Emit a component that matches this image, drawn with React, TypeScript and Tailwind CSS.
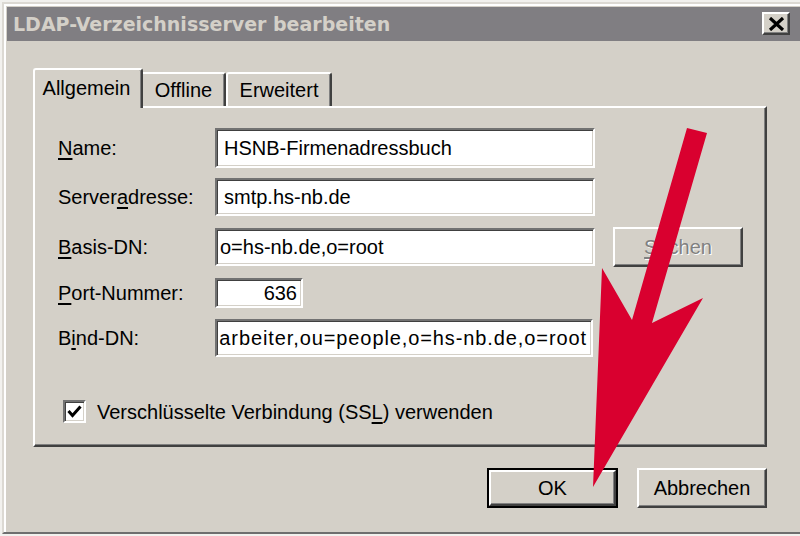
import React from "react";

function U({ children }: { children: React.ReactNode }) {
  return <span className="underline decoration-[1.5px] underline-offset-[3px]">{children}</span>;
}

function Field({ className, children }: { className: string; children: React.ReactNode }) {
  return (
    <div
      className={
        "bg-white border-2 border-t-[#727272] border-l-[#727272] border-r-white border-b-white shadow-[inset_1px_1px_0_#404040,inset_-1px_-1px_0_#d4d0c8] flex items-center whitespace-nowrap overflow-hidden " +
        className
      }
    >
      {children}
    </div>
  );
}

export default function App() {
  return (
    <div className="relative w-[800px] h-[536px] overflow-hidden bg-[#f2f1ee] font-['Liberation_Sans',Arial,sans-serif] text-[20px] text-black">
      <div className="ml-[2px] mt-[2px] w-[800px] h-[532px] bg-[#d4d0c8] border-l-2 border-t-2 border-b-2 border-l-[#dcd9d3] border-t-[#dcd9d3] border-b-[#6e6e6e] shadow-[inset_2px_2px_0_#ffffff] pl-[3px] pt-[3px] flex flex-col">
        {/* Title bar */}
        <div className="h-[34px] shrink-0 bg-[#807e82] flex items-start justify-between pl-[6px] pr-[12px]">
          <div className="h-[34px] flex items-center pt-[1px] font-['DejaVu_Sans',sans-serif] font-bold text-[19px] text-[#d4d0c8] whitespace-nowrap">
            LDAP-Verzeichnisserver bearbeiten
          </div>
          <div className="mt-[5px] w-[28px] h-[23px] bg-[#d4d0c8] border-t-2 border-l-2 border-r-2 border-b-2 border-t-white border-l-white border-r-[#404040] border-b-[#404040] shadow-[inset_-1px_-1px_0_#808080] flex items-center justify-center">
            <svg width="17" height="14" viewBox="0 0 17 14">
              <path d="M2 1 L15 13 M15 1 L2 13" stroke="#000" strokeWidth="3.2" />
            </svg>
          </div>
        </div>

        {/* Body */}
        <div className="pl-[26px] pt-[27px] flex flex-col">
          {/* Tabs */}
          <div className="flex items-end h-[38px] w-[734px]">
            <div className="relative z-10 -mb-[2px] h-[40px] w-[110px] bg-[#d4d0c8] border-l-2 border-t-2 border-r-2 border-l-white border-t-white border-r-[#404040] rounded-t-[3px] shadow-[inset_-1px_0_0_#808080] flex items-center justify-center pr-[3px] pb-[3px]">
              Allgemein
            </div>
            <div className="h-[34px] w-[83px] bg-[#d4d0c8] border-t-2 border-r-2 border-t-white border-r-[#404040] rounded-tr-[3px] shadow-[inset_-1px_0_0_#808080] flex items-center justify-center">
              Offline
            </div>
            <div className="h-[34px] w-[106px] bg-[#d4d0c8] border-l-2 border-t-2 border-r-2 border-l-white border-t-white border-r-[#404040] rounded-t-[3px] shadow-[inset_-1px_0_0_#808080] flex items-center justify-center">
              Erweitert
            </div>
          </div>

          {/* Panel */}
          <div className="w-[734px] h-[341px] border-t-2 border-l-2 border-r-2 border-b-2 border-t-white border-l-white border-r-[#404040] border-b-[#404040] shadow-[inset_-1px_-1px_0_#808080] pt-[20px] pl-[23px] flex flex-col">
            <div className="flex items-center h-[40px]">
              <div className="w-[157px] shrink-0">
                <U>N</U>ame:
              </div>
              <Field className="w-[380px] h-[40px] pl-[7px]">HSNB-Firmenadressbuch</Field>
            </div>
            <div className="flex items-center h-[38px] mt-[10px]">
              <div className="w-[157px] shrink-0">
                Server<U>a</U>dresse:
              </div>
              <Field className="w-[380px] h-[38px] pl-[7px]">smtp.hs-nb.de</Field>
            </div>
            <div className="flex items-start h-[40px] mt-[11px]">
              <div className="w-[157px] shrink-0 h-[40px] flex items-center">
                <span>
                  <U>B</U>asis-DN:
                </span>
              </div>
              <Field className="w-[380px] h-[38px] mt-[1px] pl-[3px]">o=hs-nb.de,o=root</Field>
              <div className="ml-[18px] w-[130px] h-[40px] bg-[#d4d0c8] border-2 border-t-white border-l-white border-r-[#404040] border-b-[#404040] shadow-[inset_-1px_-1px_0_#808080] flex items-center justify-center text-[#808080] [text-shadow:1px_1px_0_#ffffff]">
                <span>
                  <U>S</U>uchen
                </span>
              </div>
            </div>
            <div className="flex items-center h-[30px] mt-[11px]">
              <div className="w-[157px] shrink-0">
                <U>P</U>ort-Nummer:
              </div>
              <Field className="w-[88px] h-[30px] justify-end pr-[4px]">636</Field>
            </div>
            <div className="flex items-center h-[38px] mt-[11px]">
              <div className="w-[157px] shrink-0">
                B<U>i</U>nd-DN:
              </div>
              <Field className="w-[378px] h-[38px] justify-end pr-[4px]">
                <span className="tracking-[0.9px]">arbeiter,ou=people,o=hs-nb.de,o=root</span>
              </Field>
            </div>
            <div className="flex items-center h-[23px] mt-[43px]">
              <div className="ml-[5px] w-[23px] h-[23px] bg-white border-2 border-t-[#727272] border-l-[#727272] border-r-white border-b-white shadow-[inset_1px_1px_0_#404040,inset_-1px_-1px_0_#d4d0c8] flex items-center justify-center">
                <svg width="15" height="13" viewBox="0 0 15 13">
                  <path d="M1.5 6 L5.5 10.5 L13.5 1.5" stroke="#000" strokeWidth="3" fill="none" />
                </svg>
              </div>
              <div className="ml-[11px] whitespace-nowrap">
                Verschlüsselte Verbindung (SS<U>L</U>) verwenden
              </div>
            </div>
          </div>

          {/* Buttons */}
          <div className="w-[734px] mt-[21px] flex justify-end gap-[19px]">
            <div className="w-[131px] h-[40px] border-2 border-black">
              <div className="w-full h-full bg-[#d4d0c8] border-2 border-t-white border-l-white border-r-[#404040] border-b-[#404040] shadow-[inset_-1px_-1px_0_#808080] flex items-center justify-center">
                OK
              </div>
            </div>
            <div className="w-[130px] h-[40px] bg-[#d4d0c8] border-2 border-t-white border-l-white border-r-[#404040] border-b-[#404040] shadow-[inset_-1px_-1px_0_#808080] flex items-center justify-center">
              Abbrechen
            </div>
          </div>
        </div>
      </div>

      {/* Red arrow annotation */}
      <svg className="absolute left-0 top-0 pointer-events-none" width="800" height="536" viewBox="0 0 800 536">
        <polygon
          points="687,128 707,133 652,323 703,298 593,487 602,268 632,320"
          fill="#d9002f"
        />
      </svg>
    </div>
  );
}
